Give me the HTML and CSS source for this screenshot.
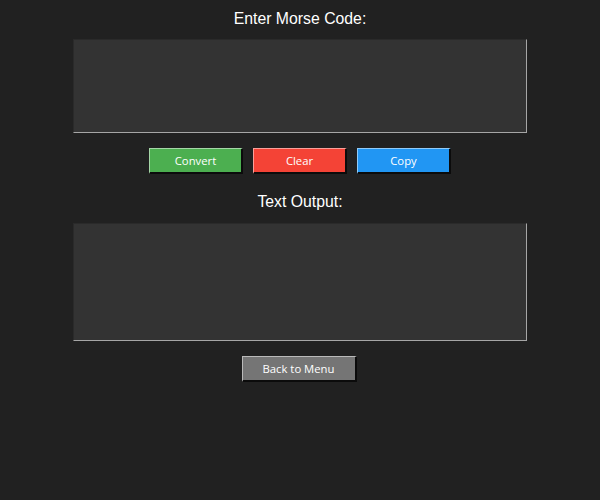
FILE: index.html
```html
<!DOCTYPE html>
<html>
<head>
<meta charset="utf-8">
<link rel="stylesheet" href="styles.css">
</head>
<body>
<main class="app">
  <div class="label label-top">Enter Morse Code:</div>
  <textarea class="box box-input"></textarea>
  <div class="buttons">
    <button class="btn btn-green">Convert</button>
    <button class="btn btn-red">Clear</button>
    <button class="btn btn-blue">Copy</button>
  </div>
  <div class="label label-output">Text Output:</div>
  <textarea class="box box-output"></textarea>
  <button class="btn btn-gray btn-back">Back to Menu</button>
</main>
</body>
</html>
```
FILE: styles.css
```css
html, body {
  margin: 0;
  padding: 0;
  background: #212121;
  height: 100%;
}
.app {
  display: flex;
  flex-direction: column;
  align-items: center;
  padding-top: 9px;
}
.label {
  font-family: "Liberation Sans", Arial, sans-serif;
  font-size: 15.8px;
  line-height: 19px;
  color: #ffffff;
}
.label-top {
  margin-bottom: 11px;
}
.label-output {
  margin-top: 18px;
  margin-bottom: 12px;
}
.box {
  display: block;
  box-sizing: border-box;
  width: 454px;
  margin: 0;
  padding: 0;
  resize: none;
  background: #333333;
  border-style: solid;
  border-width: 1px;
  border-color: #2a2a2a #a6a6a6 #a6a6a6 #2a2a2a;
  outline: none;
}
.box-input { height: 94px; }
.box-output { height: 118px; }
.buttons {
  display: flex;
  gap: 10px;
  margin-top: 15px;
}
.btn {
  box-sizing: border-box;
  height: 26px;
  width: 94px;
  padding: 0;
  margin: 0;
  font-family: "Open Sans", "Noto Sans", sans-serif;
  font-size: 11.3px;
  color: #ffffff;
  border-style: solid;
  border-width: 1px 2px 2px 1px;
}
.btn-green {
  background: #4caf50;
  border-color: #a5d6a7 #0b0b0b #0b0b0b #a5d6a7;
}
.btn-red {
  background: #f44336;
  border-color: #f9a09a #0b0b0b #0b0b0b #f9a09a;
}
.btn-blue {
  background: #2196f3;
  border-color: #90cbf9 #0b0b0b #0b0b0b #90cbf9;
}
.btn-gray {
  background: #757575;
  border-color: #bababa #0b0b0b #0b0b0b #bababa;
}
.btn-back {
  width: 115px;
  margin-top: 15px;
  margin-right: 2px;
}
```
